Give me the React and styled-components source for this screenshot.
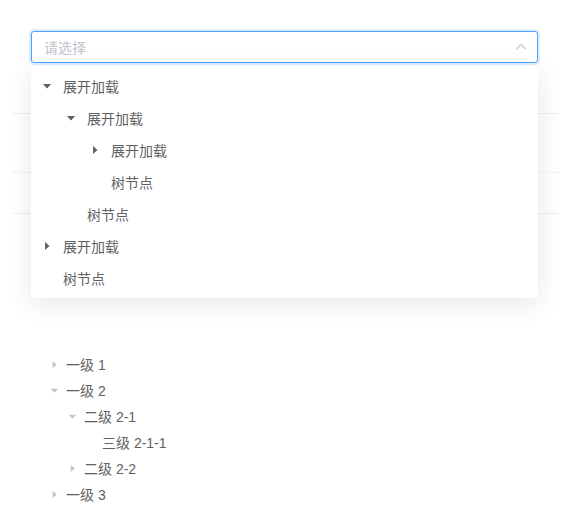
import React from "react";
import styled, { createGlobalStyle } from "styled-components";

const Global = createGlobalStyle`
  html, body { margin: 0; padding: 0; background: #fff; }
  body { font-family: "Liberation Sans", "Noto Sans CJK SC", sans-serif; font-size: 14px; color: #606266; }
`;

const Page = styled.div`
  padding-top: 31px;
  width: 573px;
  height: 531px;
  box-sizing: border-box;
  overflow: hidden;
`;

const SelectWrap = styled.div`
  position: relative;
  margin: 0 35px 0 31px;
  z-index: 2;
`;

const Input = styled.div`
  height: 32px;
  box-sizing: border-box;
  border: 1px solid #4aa3ff;
  border-radius: 3px;
  box-shadow: 0 0 0 2px rgba(64, 158, 255, 0.18);
  display: flex;
  align-items: center;
  justify-content: space-between;
  padding: 0 10px 0 12px;
  background: #fff;
`;

const Placeholder = styled.span`
  color: #c0c4cc;
  font-size: 14px;
  font-family: "Noto Sans CJK SC", sans-serif;
`;

const Dropdown = styled.div`
  position: absolute;
  top: 35px;
  left: 0;
  right: 0;
  background: #fff;
  border-radius: 3px;
  box-shadow: 0 6px 26px rgba(0, 0, 0, 0.1);
  padding: 4px 0;
`;

const DRow = styled.div`
  height: 32px;
  display: flex;
  align-items: center;
  padding-left: ${(p) => 8 + p.$level * 24}px;
  font-family: "Noto Sans CJK SC", sans-serif;
  font-size: 14px;
  color: #606266;
`;

const IconBox = styled.span`
  width: ${(p) => p.$w}px;
  flex: none;
  display: flex;
  align-items: center;
  justify-content: center;
  margin-right: ${(p) => p.$gap}px;
`;

const Panel = styled.div`
  margin: 0 14px 0 13px;
`;

const PanelRow = styled.div`
  height: ${(p) => p.$h}px;
  border-bottom: 1px ${(p) => (p.$dashed ? "dashed" : "solid")} #edeef2;
`;

const Tree = styled.div`
  margin: 137px 0 0 42px;
`;

const TRow = styled.div`
  height: 26px;
  display: flex;
  align-items: center;
  padding-left: ${(p) => p.$level * 18}px;
  font-size: 14px;
  color: #606266;
`;

const Caret = ({ dir, color, size }) => (
  <svg width={size} height={size} viewBox="0 0 10 10">
    {dir === "down" ? (
      <path d="M1 3 L9 3 L5 7.5 Z" fill={color} />
    ) : (
      <path d="M3 1 L3 9 L7.5 5 Z" fill={color} />
    )}
  </svg>
);

const ArrowUp = () => (
  <svg width="12" height="12" viewBox="0 0 12 12">
    <path d="M1.5 8 L6 3.5 L10.5 8" fill="none" stroke="#c0c4cc" strokeWidth="1.1" />
  </svg>
);

const dropItems = [
  { level: 0, label: "展开加载", caret: "down" },
  { level: 1, label: "展开加载", caret: "down" },
  { level: 2, label: "展开加载", caret: "right" },
  { level: 2, label: "树节点" },
  { level: 1, label: "树节点" },
  { level: 0, label: "展开加载", caret: "right" },
  { level: 0, label: "树节点" },
];

const treeItems = [
  { level: 0, label: "一级 1", caret: "right" },
  { level: 0, label: "一级 2", caret: "down" },
  { level: 1, label: "二级 2-1", caret: "down" },
  { level: 2, label: "三级 2-1-1" },
  { level: 1, label: "二级 2-2", caret: "right" },
  { level: 0, label: "一级 3", caret: "right" },
];

export default function App() {
  return (
    <Page>
      <Global />
      <SelectWrap>
        <Input>
          <Placeholder>请选择</Placeholder>
          <ArrowUp />
        </Input>
        <Dropdown>
          {dropItems.map((it, i) => (
            <DRow key={i} $level={it.level}>
              <IconBox $w={16} $gap={8}>
                {it.caret && <Caret dir={it.caret} color="#606266" size={10} />}
              </IconBox>
              {it.label}
            </DRow>
          ))}
        </Dropdown>
      </SelectWrap>
      <Panel>
        <PanelRow $h={50} />
        <PanelRow $h={58} $dashed />
        <PanelRow $h={40} />
      </Panel>
      <Tree>
        {treeItems.map((it, i) => (
          <TRow key={i} $level={it.level}>
            <IconBox $w={24} $gap={0}>
              {it.caret && <Caret dir={it.caret} color="#c0c4cc" size={9} />}
            </IconBox>
            {it.label}
          </TRow>
        ))}
      </Tree>
    </Page>
  );
}
